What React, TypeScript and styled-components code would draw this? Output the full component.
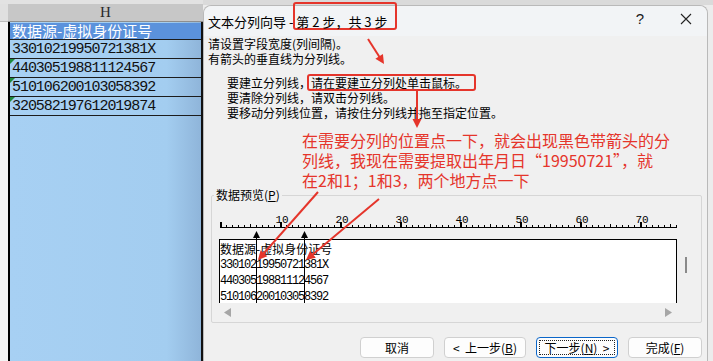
import React from "react";
import styled, { createGlobalStyle } from "styled-components";

const CJK = `"Noto Sans CJK SC", "Liberation Sans", sans-serif`;
const MONO = `"Liberation Mono", "DejaVu Sans Mono", monospace`;
const RED = "#e5352b";

const GlobalStyle = createGlobalStyle`
  html, body { margin: 0; padding: 0; background: #ececec; }
  body { font-family: ${CJK}; color: #000; }
`;

const ids = [
  { id: "33010219950721381X", flag: false },
  { id: "440305198811124567", flag: true },
  { id: "510106200103058392", flag: true },
  { id: "320582197612019874", flag: true },
];

// the preview window only has room for the header and three rows
const VISIBLE_ROWS = 3;

// column breaks, counted in characters from the left of the preview
const breaks = [6, 14];
const CHAR = 6;

const arrows = [
  [368, 39, 384, 64],
  [417, 91, 417, 128],
  [318, 192, 258, 260],
  [379, 199, 306, 260],
];

const Page = styled.div`
  position: relative;
  display: flex;
  width: 713px;
  height: 361px;
  overflow: hidden;
  background: linear-gradient(#dadada 0 5px, #ececec 5px);
`;

/* ---------- spreadsheet behind the dialog ---------- */

const Sheet = styled.div`
  width: 203px;
  flex-shrink: 0;
  display: flex;
  flex-direction: column;
`;

const SheetTop = styled.div`
  height: 4px;
  background: #e2e2e2;
`;

const HeaderRow = styled.div`
  display: flex;
  height: 18px;
`;

const Corner = styled.div`
  width: 8px;
  box-sizing: border-box;
  background: #e0e0e0;
  border-bottom: 1px solid #bdbdbd;
`;

const ColHeader = styled.div`
  flex: 1;
  box-sizing: border-box;
  display: flex;
  align-items: center;
  justify-content: center;
  background: #c7c7c7;
  border-bottom: 1px solid #8e8e8e;
  font: 15px "Liberation Serif", serif;
  color: #2a2a2a;
`;

const SheetBody = styled.div`
  flex: 1;
  display: flex;
`;

const RowHeads = styled.div`
  width: 8px;
  background: #f4f4f4;
`;

const Column = styled.div`
  flex: 1;
  border-left: 2px solid #000;
  border-right: 2px solid #111;
  background: linear-gradient(to right, #a7d0f3 0%, #a3cdf0 82%, #8fb5da 100%);
`;

const HeadCell = styled.div`
  height: 16px;
  margin-top: 1px;
  padding-left: 2px;
  background: #5b92dc;
  color: #fff;
  font: 15px/16px ${CJK};
  white-space: nowrap;
`;

const DataCell = styled.div<{ $flag?: boolean; $last?: boolean }>`
  position: relative;
  height: 18px;
  padding-left: 2px;
  border-top: 1px solid #1c1c1c;
  border-bottom: ${(p) => (p.$last ? "1px solid #1c1c1c" : "none")};
  font: 15px/19px ${MONO};
  letter-spacing: -1.05px;
  color: #111;
  &::before {
    content: "";
    display: ${(p) => (p.$flag ? "block" : "none")};
    position: absolute;
    left: 0;
    top: 0;
    border-top: 5px solid #1d8a3b;
    border-right: 5px solid transparent;
  }
`;

/* ---------- wizard dialog ---------- */

const Dialog = styled.div`
  flex: 1;
  display: flex;
  flex-direction: column;
  margin: 5px 5px 0 0;
  background: #f0f0f0;
  border: 1px solid #b9b9b9;
  border-bottom: none;
  border-radius: 8px 8px 0 0;
`;

const TitleBar = styled.div`
  display: flex;
  align-items: center;
  height: 30px;
  padding-left: 4px;
  background: #f2f4f6;
  border-radius: 8px 8px 0 0;
  font: 13px ${CJK};
`;

const TitleText = styled.div`
  display: flex;
  align-items: center;
  white-space: pre;
`;

const TitleMark = styled.span`
  box-sizing: border-box;
  display: inline-flex;
  align-items: center;
  height: 28px;
  margin: 0 -8px 10px -3px;
  padding: 10px 8px 0 1px;
  border: 2px solid ${RED};
  border-radius: 3px;
`;

const Controls = styled.div`
  margin-left: auto;
  display: flex;
  align-items: center;
  height: 100%;
`;

const HelpBtn = styled.div`
  width: 30px;
  text-align: center;
  font: 15px "Liberation Sans", sans-serif;
  color: #1a1a1a;
  margin-top: -5px;
`;

const CloseBtn = styled.div`
  width: 42px;
  display: flex;
  justify-content: center;
  margin: -5px 0 0 10px;
`;

const Body = styled.div`
  display: flex;
  flex-direction: column;
  padding: 0 5px 0 4px;
  font: 12px/15px ${CJK};
`;

const Tips = styled.div`
  margin: 9px 0 0 19px;
`;

const TipMark = styled.span`
  display: inline-block;
  line-height: 13px;
  margin: -2px -9px -2px -4px;
  padding: 0 7px 0 2px;
  border: 2px solid ${RED};
  border-radius: 3px;
`;

const Note = styled.div`
  margin: 10px 0 0 94px;
  color: ${RED};
  font: 16px/20px ${CJK};
  white-space: nowrap;
`;

const Group = styled.fieldset`
  margin: -2px 0 0 3px;
  padding: 9px 0 1px 2px;
  border: 1px solid #d6d6d6;
  border-radius: 2px;
  min-width: 0;
`;

const Legend = styled.legend`
  padding: 0 2px;
  font: 12px/14px ${CJK};
`;

const PreviewRow = styled.div`
  display: flex;
  margin-left: 5px;
`;

const PreviewArea = styled.div`
  position: relative;
  width: 462px;
`;

const Ruler = styled.svg`
  display: block;
`;

const PreviewBox = styled.div`
  box-sizing: border-box;
  width: 458px;
  height: 64px;
  margin-top: 10px;
  padding-top: 1px;
  background: #fff;
  border: 1px solid #000;
  border-bottom: none;
`;

const PreviewHead = styled.div`
  font: 12px/16px ${CJK};
  white-space: nowrap;
`;

const PreviewLine = styled.div`
  font: 12px/15px ${MONO};
  margin-top: 1px;
  letter-spacing: -1.2px;
  white-space: nowrap;
`;

const BreakMark = styled.svg`
  position: absolute;
  top: 20px;
`;

const HScroll = styled.div`
  display: flex;
  align-items: center;
  justify-content: space-between;
  width: 458px;
  height: 18px;
  padding: 0 5px;
  box-sizing: border-box;
`;

const VScroll = styled.div`
  flex: 1;
`;

const Thumb = styled.div`
  width: 2px;
  height: 16px;
  margin: 46px 0 0 4px;
  background: #8a8a8a;
`;

const ButtonRow = styled.div`
  display: flex;
  justify-content: flex-end;
  gap: 10px;
  margin-top: 14px;
`;

const Btn = styled.button<{ $primary?: boolean; $w: number }>`
  box-sizing: border-box;
  width: ${(p) => p.$w}px;
  height: 21px;
  padding: 0;
  background: #fdfdfd;
  border: 1px solid ${(p) => (p.$primary ? "#0b66c9" : "#d0d0d0")};
  border-radius: 4px;
  font: 12px ${CJK};
  color: #000;
  outline: ${(p) => (p.$primary ? "1px dotted #222" : "none")};
  outline-offset: -4px;
  white-space: pre;
`;

const Overlay = styled.svg`
  position: absolute;
  left: 0;
  top: 0;
  pointer-events: none;
`;

function unit(x1: number, y1: number, x2: number, y2: number) {
  const len = Math.hypot(x2 - x1, y2 - y1);
  return [(x2 - x1) / len, (y2 - y1) / len];
}

function arrowHead(x1: number, y1: number, x2: number, y2: number) {
  const [ux, uy] = unit(x1, y1, x2, y2);
  const bx = x2 - ux * 9;
  const by = y2 - uy * 9;
  return `${x2},${y2} ${bx - uy * 4.5},${by + ux * 4.5} ${bx + uy * 4.5},${by - ux * 4.5}`;
}

function RulerMarks() {
  const ticks = [];
  for (let i = 0; i <= 76; i++) {
    const x = 1 + i * CHAR;
    const major = i % 10 === 0;
    const h = major ? 5 : i % 5 === 0 ? 3 : 2;
    ticks.push(<rect key={i} x={x} y={16 - h} width={major ? 2 : 1} height={h} fill="#000" />);
    if (major && i > 0) {
      ticks.push(
        <text key={"n" + i} x={x + 2} y={12} fontSize="11" fontFamily="Liberation Mono, monospace" textAnchor="middle">
          {i}
        </text>
      );
    }
  }
  return (
    <Ruler width="462" height="18">
      <rect x="1" y="16" width="457" height="1" fill="#000" />
      {ticks}
    </Ruler>
  );
}

export default function App() {
  return (
    <>
      <GlobalStyle />
      <Page>
        <Sheet>
          <SheetTop />
          <HeaderRow>
            <Corner />
            <ColHeader>H</ColHeader>
          </HeaderRow>
          <SheetBody>
            <RowHeads />
            <Column>
              <HeadCell>数据源-虚拟身份证号</HeadCell>
              {ids.map((r, i) => (
                <DataCell key={r.id} $flag={r.flag} $last={i === ids.length - 1}>
                  {r.id}
                </DataCell>
              ))}
            </Column>
          </SheetBody>
        </Sheet>

        <Dialog>
          <TitleBar>
            <TitleText>
              <span>文本分列向导 - </span>
              <TitleMark>第 2 步，共 3 步</TitleMark>
            </TitleText>
            <Controls>
              <HelpBtn>?</HelpBtn>
              <CloseBtn>
                <svg width="12" height="12" viewBox="0 0 12 12">
                  <path d="M1 1 L11 11 M11 1 L1 11" stroke="#222" strokeWidth="1.1" />
                </svg>
              </CloseBtn>
            </Controls>
          </TitleBar>

          <Body>
            <div>请设置字段宽度(列间隔)。</div>
            <div>有箭头的垂直线为分列线。</div>
            <Tips>
              <div>
                要建立分列线，<TipMark>请在要建立分列处单击鼠标。</TipMark>
              </div>
              <div>要清除分列线，请双击分列线。</div>
              <div>要移动分列线位置，请按住分列线并拖至指定位置。</div>
            </Tips>
            <Note>
              在需要分列的位置点一下，就会出现黑色带箭头的分
              <br />
              列线，我现在需要提取出年月日“19950721”，就
              <br />
              在2和1；1和3，两个地方点一下
            </Note>

            <Group>
              <Legend>
                数据预览(<u>P</u>)
              </Legend>
              <PreviewRow>
                <PreviewArea>
                  <RulerMarks />
                  <PreviewBox>
                    <PreviewHead>数据源-虚拟身份证号</PreviewHead>
                    {ids.slice(0, VISIBLE_ROWS).map((r) => (
                      <PreviewLine key={r.id}>{r.id}</PreviewLine>
                    ))}
                  </PreviewBox>
                  {breaks.map((b) => (
                    <BreakMark key={b} width="7" height="72" style={{ left: 1 + b * CHAR - 3 }}>
                      <polygon points="0,7 3.5,0 7,7" fill="#000" />
                      <rect x="3" y="6" width="1" height="66" fill="#000" />
                    </BreakMark>
                  ))}
                  <HScroll>
                    <svg width="7" height="9">
                      <polygon points="7,0 0,4.5 7,9" fill="#a6a6a6" />
                    </svg>
                    <svg width="7" height="9">
                      <polygon points="0,0 7,4.5 0,9" fill="#a6a6a6" />
                    </svg>
                  </HScroll>
                </PreviewArea>
                <VScroll>
                  <Thumb />
                </VScroll>
              </PreviewRow>
            </Group>

            <ButtonRow>
              <Btn $w={74}>取消</Btn>
              <Btn $w={82}>
                {"<  上一步("}
                <u>B</u>)
              </Btn>
              <Btn $w={82} $primary>
                下一步(<u>N</u>){"  >"}
              </Btn>
              <Btn $w={74}>
                完成(<u>F</u>)
              </Btn>
            </ButtonRow>
          </Body>
        </Dialog>

        <Overlay width="713" height="361">
          {arrows.map(([x1, y1, x2, y2], i) => {
            const [ux, uy] = unit(x1, y1, x2, y2);
            return (
              <g key={i}>
                <line x1={x1} y1={y1} x2={x2 - ux * 6} y2={y2 - uy * 6} stroke={RED} strokeWidth="2" />
                <polygon points={arrowHead(x1, y1, x2, y2)} fill={RED} />
              </g>
            );
          })}
        </Overlay>
      </Page>
    </>
  );
}
